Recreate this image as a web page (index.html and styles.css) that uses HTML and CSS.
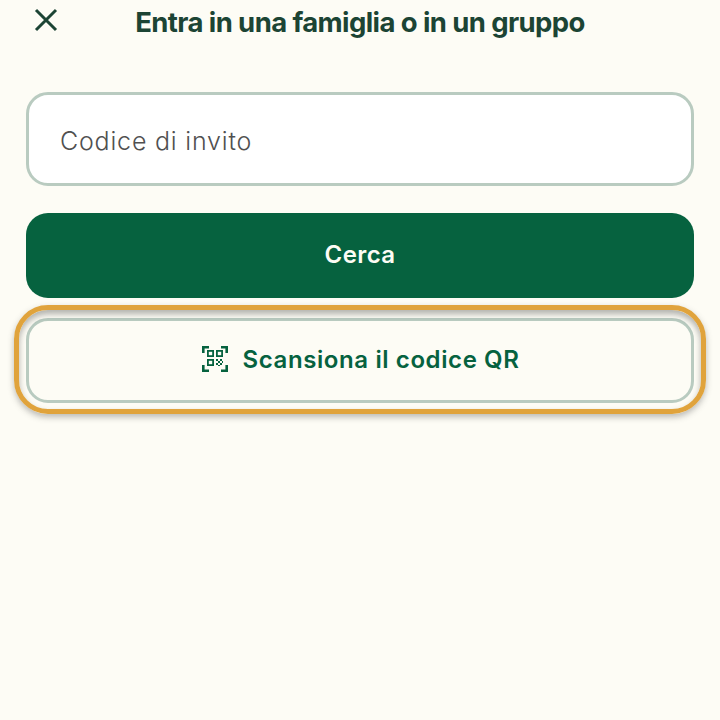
FILE: index.html
```html
<!DOCTYPE html>
<html lang="it">
<head>
<meta charset="UTF-8" />
<meta name="viewport" content="width=device-width, initial-scale=1" />
<title>Entra in una famiglia o in un gruppo</title>
<link rel="stylesheet" href="styles.css">
</head>
<body>

<div class="screen">
  <header class="topBar">
    <button class="closeBtn" aria-label="Chiudi">
      <svg width="26" height="26" viewBox="0 0 26 26" fill="none" stroke="#1c4434" stroke-width="3">
        <path d="M3 3 L23 23 M23 3 L3 23" />
      </svg>
    </button>
    <h1 class="title">Entra in una famiglia o in un gruppo</h1>
  </header>

  <form class="joinForm">
    <input class="codeInput" type="text" placeholder="Codice di invito" />
    <button class="searchBtn" type="button">Cerca</button>
    <button class="qrBtn" type="button">
      <svg width="26" height="26" viewBox="0 0 26 26" fill="none" stroke="#06623f">
        <path d="M1.3 7 V1.3 H7 M19 1.3 H24.7 V7 M1.3 19 V24.7 H7 M19 24.7 H24.7 V19" stroke-width="2.6" />
        <rect x="5.9" y="4.9" width="5.2" height="5.2" stroke-width="1.8" />
        <rect x="14.9" y="4.9" width="5.2" height="5.2" stroke-width="1.8" />
        <rect x="5.9" y="13.9" width="5.2" height="5.2" stroke-width="1.8" />
        <path d="M14 13 h2 v2 h-2 z M18 13 h2 v2 h-2 z M16 15 h2 v2 h-2 z M20 15 h1 v2 h-1 z M14 17 h2 v2 h-2 z M18 17 h2 v2 h-2 z M16 19 h2 v1 h-2 z" fill="#06623f" stroke="none" />
      </svg>
      <span>Scansiona il codice QR</span>
    </button>
  </form>
</div>

</body>
</html>
```
FILE: styles.css
```css
* {
  box-sizing: border-box;
}
html, body {
  margin: 0;
  height: 100%;
}
body {
  background: #fdfcf5;
  font-family: Inter, "Liberation Sans", sans-serif;
  overflow: hidden;
}
.screen {
  padding: 0 26px;
}
.topBar {
  position: relative;
  height: 92px;
  padding-top: 5px;
}
.closeBtn {
  position: absolute;
  left: 7px;
  top: 7px;
  padding: 0;
  width: 26px;
  height: 26px;
  border: none;
  background: none;
}
.title {
  margin: 0;
  text-align: center;
  font-size: 27.5px;
  line-height: 34px;
  font-weight: 700;
  letter-spacing: -0.6px;
  color: #1c4434;
}
.joinForm {
  display: flex;
  flex-direction: column;
}
.codeInput {
  height: 94px;
  padding: 4px 31px 0;
  font-family: Inter, sans-serif;
  font-size: 25px;
  font-weight: 300;
  letter-spacing: 0.8px;
  background: #fff;
  border: 3px solid #b9cbc0;
  border-radius: 22px;
  outline: none;
}
.codeInput::placeholder {
  color: #505050;
  opacity: 1;
}
.searchBtn {
  height: 85px;
  margin-top: 27px;
  padding-bottom: 3px;
  border: none;
  border-radius: 22px;
  background: #06623f;
  color: #fdfcf5;
  font-family: Inter, sans-serif;
  font-size: 24px;
  font-weight: 600;
  letter-spacing: 0.4px;
}
.qrBtn {
  position: relative;
  height: 85px;
  margin-top: 20px;
  padding: 0 0 3px 1px;
  display: flex;
  align-items: center;
  justify-content: center;
  gap: 15px;
  background: none;
  border: 3px solid #b9cbc0;
  border-radius: 22px;
  color: #06623f;
  font-family: Inter, sans-serif;
  font-size: 24px;
  font-weight: 600;
  letter-spacing: 0.6px;
}
/* orange focus ring over the button */
.qrBtn::after {
  content: "";
  position: absolute;
  left: -15px;
  right: -15px;
  top: -16px;
  bottom: -14px;
  border: 5px solid #e0a33c;
  border-radius: 34px;
  box-shadow: 0 3px 6px rgba(60, 60, 60, 0.35), inset 0 4px 6px rgba(60, 60, 60, 0.4);
}
```
